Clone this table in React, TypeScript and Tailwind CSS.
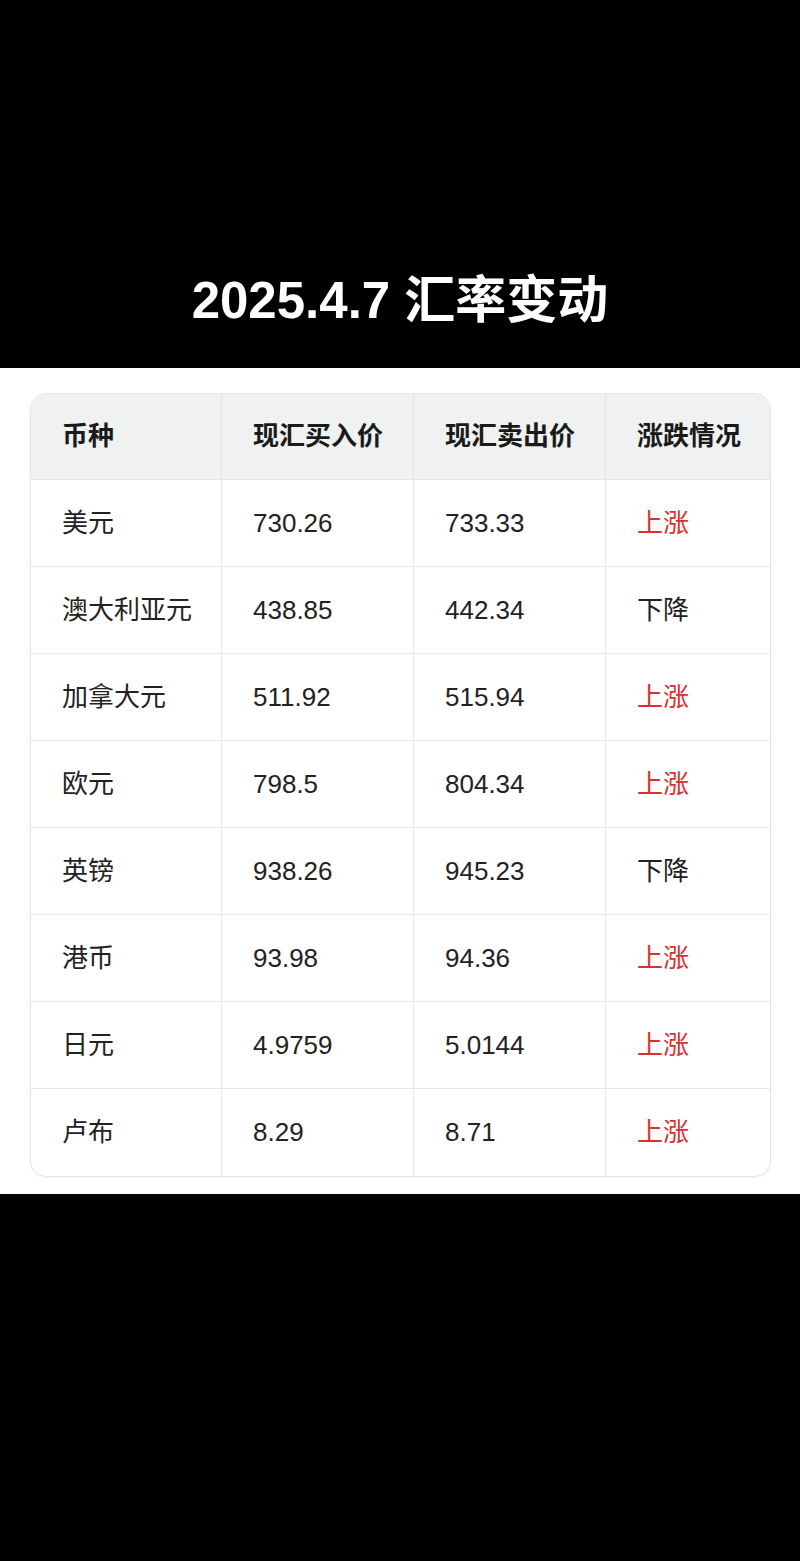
import React from 'react';

// 2025.4.7 exchange rate table
const rows = [
  { name: '美元', buy: '730.26', sell: '733.33', up: true },
  { name: '澳大利亚元', buy: '438.85', sell: '442.34', up: false },
  { name: '加拿大元', buy: '511.92', sell: '515.94', up: true },
  { name: '欧元', buy: '798.5', sell: '804.34', up: true },
  { name: '英镑', buy: '938.26', sell: '945.23', up: false },
  { name: '港币', buy: '93.98', sell: '94.36', up: true },
  { name: '日元', buy: '4.9759', sell: '5.0144', up: true },
  { name: '卢布', buy: '8.29', sell: '8.71', up: true },
];

const headers = ['币种', '现汇买入价', '现汇卖出价', '涨跌情况'];

const font = { fontFamily: '"Liberation Sans", "Noto Sans CJK SC", sans-serif' };

export default function App() {
  return (
    <div className="w-[800px] h-[1561px] bg-black flex flex-col" style={font}>
      <div className="h-[368px] flex items-end justify-center pb-[42px]">
        <h1 className="text-white font-bold text-[51px] leading-none">2025.4.7 汇率变动</h1>
      </div>
      <div className="bg-white pt-[25px] pb-[17px] pl-[30px] pr-[29px]">
        <div className="rounded-2xl border border-[#e4e4e4] overflow-hidden shadow-[0_1px_2px_rgba(0,0,0,0.05)]">
          <div className="grid grid-cols-[191px_192px_192px_1fr] text-[26px]">
            {headers.map((h, i) => (
              <div
                key={h}
                className={`h-[86px] flex items-center pl-[31px] bg-[#f0f1f1] font-bold text-[#1a1a1a] border-b border-[#e4e4e4] ${i < 3 ? 'border-r' : ''}`}
              >
                {h}
              </div>
            ))}
            {rows.map((r, ri) => {
              const last = ri === rows.length - 1;
              const cell = `h-[87px] flex items-center pl-[31px] border-[#e8e8e8] ${last ? '' : 'border-b'}`;
              return (
                <React.Fragment key={r.name}>
                  <div className={`${cell} border-r text-[#222]`}>{r.name}</div>
                  <div className={`${cell} border-r text-[#222]`}>{r.buy}</div>
                  <div className={`${cell} border-r text-[#222]`}>{r.sell}</div>
                  <div className={`${cell} ${r.up ? 'text-[#dc2f2f]' : 'text-[#222]'}`}>{r.up ? '上涨' : '下降'}</div>
                </React.Fragment>
              );
            })}
          </div>
        </div>
      </div>
      <div className="flex-1 bg-black" />
    </div>
  );
}
